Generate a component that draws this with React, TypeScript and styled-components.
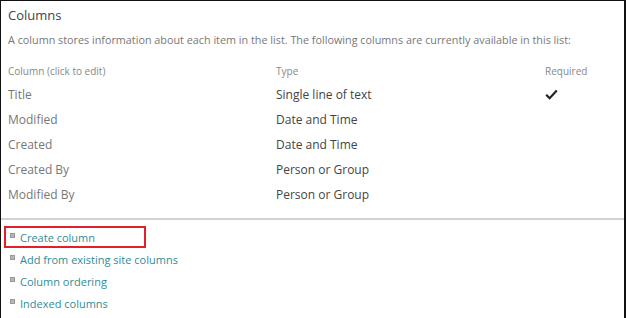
import React from "react";
import styled, { createGlobalStyle } from "styled-components";

const Global = createGlobalStyle`
  html, body { margin: 0; padding: 0; background: #fff; }
  body { font-family: "Open Sans", "Noto Sans", sans-serif; }
`;

const Frame = styled.div`
  width: 626px;
  height: 318px;
  box-sizing: border-box;
  border-top: 1px solid #111;
  border-left: 1px solid #111;
  border-right: 2px solid #111;
  overflow: hidden;
  background: #fff;
`;

const Head = styled.div`
  padding: 4px 0 0 7px;
`;

const Title = styled.div`
  font-size: 13px;
  line-height: 20px;
  color: #444;
`;

const Desc = styled.div`
  margin-top: 5px;
  font-size: 10.8px;
  line-height: 20px;
  color: #777;
  white-space: nowrap;
`;

const Table = styled.div`
  margin-top: 10px;
  display: grid;
  grid-template-columns: 268px 269px 1fr;
`;

const HeadCell = styled.div`
  font-size: 10px;
  line-height: 22px;
  color: #888;
`;

const Cell = styled.div<{ $dark?: boolean }>`
  height: 25px;
  display: flex;
  align-items: center;
  font-size: 12px;
  color: ${(p) => (p.$dark ? "#444" : "#777")};
`;

const Divider = styled.div`
  margin-top: 11px;
  height: 2px;
  background: #d2d2d2;
`;

const Links = styled.ul`
  list-style: none;
  margin: 6px 0 0 3px;
  padding: 0;
`;

const LinkItem = styled.li<{ $boxed?: boolean }>`
  display: flex;
  align-items: center;
  gap: 5px;
  height: 22px;
  width: 142px;
  box-sizing: border-box;
  padding-left: 4px;
  border: 2px solid ${(p) => (p.$boxed ? "#e0202a" : "transparent")};
  white-space: nowrap;
`;

const Bullet = styled.span`
  width: 5px;
  height: 5px;
  background: #b5b5b5;
  border: 1px solid #9a9a9a;
  box-sizing: border-box;
  flex: none;
  margin-top: -3px;
`;

const LinkText = styled.a`
  font-size: 11px;
  color: #2f8c98;
  text-decoration: none;
`;

const rows: [string, string, boolean][] = [
  ["Title", "Single line of text", true],
  ["Modified", "Date and Time", false],
  ["Created", "Date and Time", false],
  ["Created By", "Person or Group", false],
  ["Modified By", "Person or Group", false],
];

const links = [
  "Create column",
  "Add from existing site columns",
  "Column ordering",
  "Indexed columns",
];

const Check = () => (
  <svg width="13" height="11" viewBox="0 0 13 11">
    <path d="M1.2 5.8 L4.6 9.2 L11.8 1.4" fill="none" stroke="#222" strokeWidth="2.2" />
  </svg>
);

export default function App() {
  return (
    <Frame>
      <Global />
      <Head>
        <Title>Columns</Title>
        <Desc>
          A column stores information about each item in the list. The following columns are currently available in this list:
        </Desc>
        <Table>
          <HeadCell>Column (click to edit)</HeadCell>
          <HeadCell>Type</HeadCell>
          <HeadCell>Required</HeadCell>
          {rows.map(([n, t, r]) => (
            <React.Fragment key={n}>
              <Cell>{n}</Cell>
              <Cell $dark>{t}</Cell>
              <Cell>{r ? <Check /> : null}</Cell>
            </React.Fragment>
          ))}
        </Table>
      </Head>
      <Divider />
      <Links>
        {links.map((l, i) => (
          <LinkItem key={l} $boxed={i === 0}>
            <Bullet />
            <LinkText href="#">{l}</LinkText>
          </LinkItem>
        ))}
      </Links>
    </Frame>
  );
}
